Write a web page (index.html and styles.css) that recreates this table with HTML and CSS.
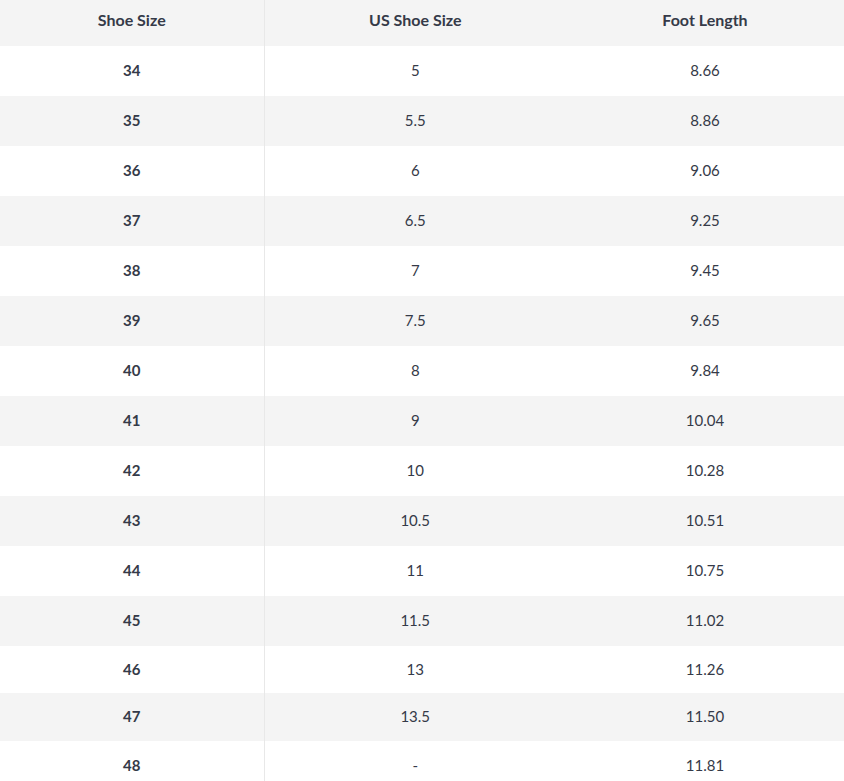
FILE: index.html
```html
<!DOCTYPE html>
<html>
<head>
<meta charset="utf-8">
<link rel="stylesheet" href="styles.css">
</head>
<body>
<table class="size-table">
  <colgroup>
    <col class="c1"><col class="c2"><col class="c3">
  </colgroup>
  <thead>
    <tr class="head"><th class="first">Shoe Size</th><th>US Shoe Size</th><th>Foot Length</th></tr>
  </thead>
  <tbody>
    <tr><td class="first">34</td><td>5</td><td>8.66</td></tr>
    <tr class="alt"><td class="first">35</td><td>5.5</td><td>8.86</td></tr>
    <tr><td class="first">36</td><td>6</td><td>9.06</td></tr>
    <tr class="alt"><td class="first">37</td><td>6.5</td><td>9.25</td></tr>
    <tr><td class="first">38</td><td>7</td><td>9.45</td></tr>
    <tr class="alt"><td class="first">39</td><td>7.5</td><td>9.65</td></tr>
    <tr><td class="first">40</td><td>8</td><td>9.84</td></tr>
    <tr class="alt"><td class="first">41</td><td>9</td><td>10.04</td></tr>
    <tr><td class="first">42</td><td>10</td><td>10.28</td></tr>
    <tr class="alt"><td class="first">43</td><td>10.5</td><td>10.51</td></tr>
    <tr><td class="first">44</td><td>11</td><td>10.75</td></tr>
    <tr class="alt"><td class="first">45</td><td>11.5</td><td>11.02</td></tr>
    <tr class="short"><td class="first">46</td><td>13</td><td>11.26</td></tr>
    <tr class="alt mid"><td class="first">47</td><td>13.5</td><td>11.50</td></tr>
    <tr><td class="first">48</td><td>-</td><td>11.81</td></tr>
  </tbody>
</table>
</body>
</html>
```

FILE: styles.css
```css
html, body {
  margin: 0;
  padding: 0;
  background: #ffffff;
}
.size-table {
  width: 844px;
  border-collapse: collapse;
  table-layout: fixed;
  font-family: Lato, "Noto Sans", sans-serif;
  color: #353a48;
}
.c1 { width: 264px; }
.c2 { width: 302px; }
.c3 { width: 278px; }
.size-table th,
.size-table td {
  padding: 0;
  text-align: center;
  vertical-align: middle;
  box-sizing: border-box;
  height: 50px;
}
.size-table th {
  height: 46px;
  font-size: 16px;
  font-weight: 700;
  background: #f4f4f4;
  padding-bottom: 7px;
}
.size-table td {
  font-size: 15px;
  font-weight: 400;
  padding-bottom: 2px;
}
.size-table .first {
  border-right: 1px solid #e8e8e8;
}
.size-table td.first {
  font-weight: 700;
}
.alt td {
  background: #f4f4f4;
}
.size-table tr.short td { height: 47px; }
.size-table tr.mid td { height: 48px; padding-bottom: 3px; }
```
